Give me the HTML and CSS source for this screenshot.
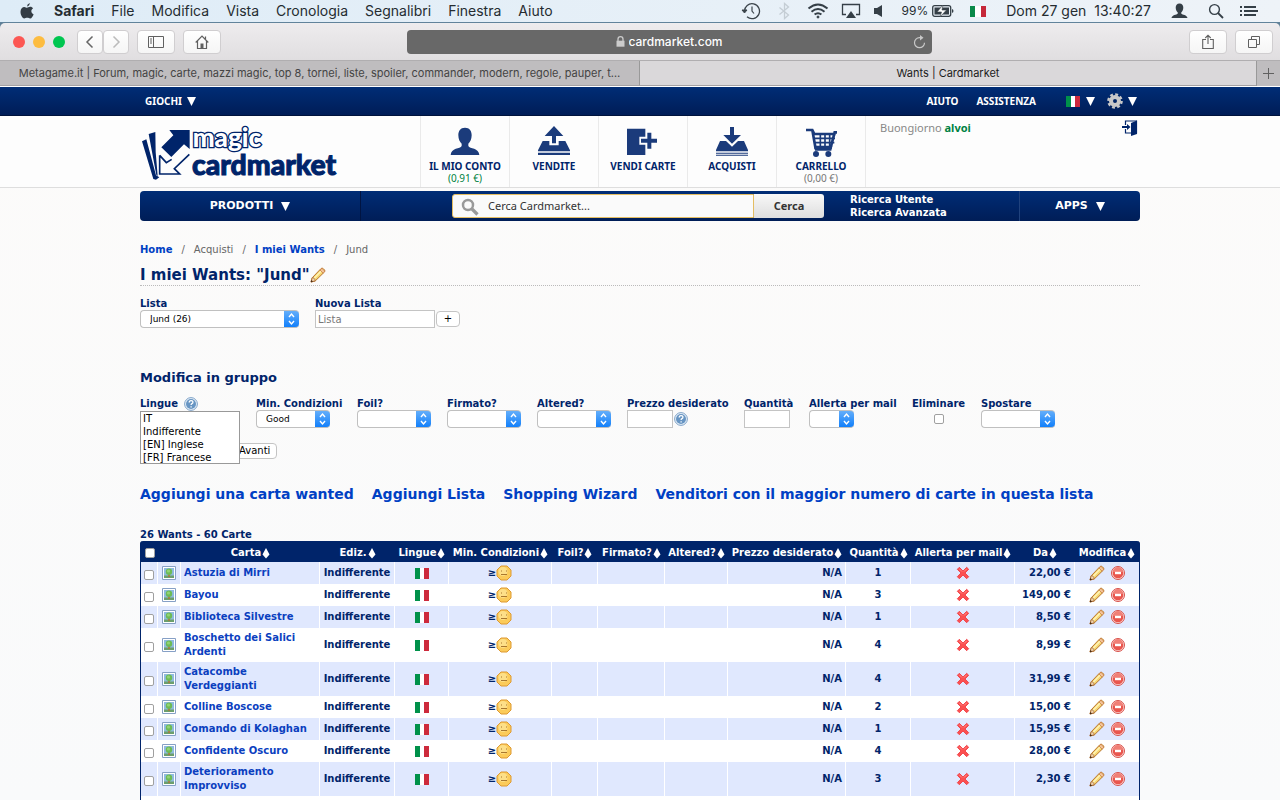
FILE: index.html
```html
<!DOCTYPE html>
<html lang="it">
<head>
<meta charset="utf-8">
<title>Wants | Cardmarket</title>
<link rel="stylesheet" href="styles.css">
</head>
<body>
<svg class="defs" aria-hidden="true">
  <symbol id="flag" viewBox="0 0 14 11"><path fill="#fff" d="M0 0h14v11H0z"/><path fill="#00914a" d="M0 0h5v11H0z"/><path fill="#cd2a3c" d="M9 0h5v11H9z"/></symbol>
  <symbol id="pencil" viewBox="0 0 16 16"><path d="M1 15l1.200-4.200L11 1.600q1-1 2.200 0l1.200 1.200q1 1 0 2.200L5.200 14z" fill="#f6d873" stroke="#b9742c"/><path d="M3.500 12L11.500 3.800" stroke="#fff3b5" stroke-width="1.500"/><path d="M10 3l3.200 3.200 1.600-2L12 1.300z" fill="#f4c59c" stroke="#c98246" stroke-width=".8"/><path d="M1 15l1.200-4.200q.8-.6 1.800.4t1.200 2.600z" fill="#f1d4ae" stroke="#9c5c26" stroke-width=".7"/><path d="M.8 15.300l.6-2.300 1.700 1.500z" fill="#402a18"/></symbol>
  <symbol id="minus" viewBox="0 0 16 16"><circle cx="8" cy="8" r="6.500" fill="#fbd9d5" stroke="#d8504a"/><circle cx="8" cy="8" r="5.300" fill="#e9564e"/><path d="M3 7a5 5 0 0 1 10 0z" fill="#f07f76"/><path d="M5 6.800h6v2.400H5z" fill="#fff"/></symbol>
  <symbol id="cross" viewBox="0 0 16 16"><path d="M3.800 1.500L8 5.700l4.200-4.200 2.300 2.300L10.300 8l4.200 4.200-2.300 2.300L8 10.300l-4.200 4.200-2.300-2.300L5.700 8 1.500 3.800z" fill="#fb5050" stroke="#f03c44"/><path d="M3.700 3.200l3 3M12.300 3.200l-3 3" stroke="#ff9a94"/></symbol>
  <symbol id="face" viewBox="0 0 16 16"><path d="M5 1h6l4 4v6l-4 4H5l-4-4V5z" fill="#fbcb5a" stroke="#dd9933"/><circle cx="7" cy="6.500" r="4.500" fill="#fddf88"/><path d="M5.500 5.500v1M10.500 5.500v1M5 9.500h6" stroke="#a8772e" fill="none"/></symbol>
  <symbol id="photo" viewBox="0 0 14 14"><path d="M.5.500h13v13H.5z" fill="#fff" stroke="#86a0c6"/><path d="M2 2h10v10H2z" fill="#8fbbe0"/><path d="M2 9.500h10V12H2z" fill="#6c9f6c"/><path d="M6.300 8h1.400v3H6.300z" fill="#b5742f"/><circle cx="7" cy="5.800" r="3.200" fill="#6dbb55"/><circle cx="6.500" cy="5" r="1.600" fill="#93d474"/></symbol>
  <symbol id="help" viewBox="0 0 14 14"><circle cx="7" cy="7" r="6.400" fill="#e8f0f8" stroke="#7fa3c8"/><circle cx="7" cy="7" r="5" fill="#6795c3"/><path d="M5.200 5.500q0-1.900 1.900-1.900t1.800 1.600q0 .9-1 1.400-.8.400-.8 1.300M7.100 9.200v1.400" fill="none" stroke="#fff" stroke-width="1.300"/></symbol>
  <symbol id="sort" viewBox="0 0 8 12"><path d="M4 1L7.500 7.500H.5zM.5 7.500h7L4 11.500z" fill="#fff"/></symbol>
  <symbol id="down" viewBox="0 0 9 9"><path d="M0 0h9L4.500 9z" fill="#fff"/></symbol>
</svg>

<div class="menubar">
  <svg class="apple" width="14" height="16" viewBox="0 0 14 16" fill="#333c44"><path d="M9.700 0q.1 2.700-2.700 3.600Q6.900 1 9.700 0zM7 4.700c.8 0 1.600-.9 3.200-.9 1.300 0 2.300.7 2.900 1.500-2.600 1.500-2.200 4.800.5 5.900-.6 1.800-2 4.300-3.400 4.300-1.200 0-1.600-.7-3-.7s-1.900.7-3 .7C2.500 15.500.5 12 .5 8.800S2.500 3.900 4.300 3.900c1.200 0 2 .8 2.700.8z"/></svg>
  <nav class="menus"><b>Safari</b><span>File</span><span>Modifica</span><span>Vista</span><span>Cronologia</span><span>Segnalibri</span><span>Finestra</span><span>Aiuto</span></nav>
  <div class="status">
    <svg width="20" height="18" viewBox="0 0 20 18" fill="none" stroke="#3b444b"><path d="M3.500 9.500a7.500 7.500 0 1 1 2.500 5.300" stroke-width="1.300"/><path d="M1 8h5L3.500 11z" fill="#3b444b"/><path d="M11 4.500V9l2 2.500" stroke-width="1.200"/></svg>
    <svg width="22" height="18" viewBox="4 0 22 18" fill="none" stroke="#c4cdd4" stroke-width="1.300"><path d="M10.500 5.500l9 7.500-4 3.500v-15l4 3.500-9 7.500"/></svg>
    <svg width="22" height="16" viewBox="0 0 22 16" fill="none" stroke="#353f47" stroke-width="2"><path d="M1.500 5.500q9.500-8 19 0M4.500 8.700q6.500-5.400 13 0M7.600 11.600q3.400-2.800 6.800 0"/><circle cx="11" cy="14" r="1" fill="#353f47" stroke-width="1"/></svg>
    <svg width="20" height="16" viewBox="0 0 20 16"><path d="M5 11.500H1.500v-10h17v10H15" fill="none" stroke="#353f47" stroke-width="1.300"/><path d="M10 8l5 7H5z" fill="#353f47"/></svg>
    <svg width="12" height="14" viewBox="0 0 12 14" fill="#353f47"><path d="M1 4h3l5-3v12l-5-3H1z"/></svg>
    <span class="battery">99%<svg width="22" height="14" viewBox="0 0 22 14"><rect x=".7" y="1.700" width="18" height="10.600" rx="2" fill="none" stroke="#353f47" stroke-width="1.300"/><path d="M2.500 3.500h14.500v7H2.500z" fill="#353f47"/><path d="M20 5v4q1.500-.5 1.500-2T20 5z" fill="#353f47"/><path d="M11 1L5 8h4.500L8 13l6.500-7H10z" fill="#fff" stroke="#353f47" stroke-width=".6"/></svg></span>
    <svg class="mac-flag" width="16" height="11" viewBox="0 0 16 11"><path fill="#fff" d="M0 0h16v11H0z"/><path fill="#0b8a4a" d="M0 0h5v11H0z"/><path fill="#c5283a" d="M11 0h5v11h-5z"/></svg>
    <span class="clock">Dom 27 gen&nbsp; 13:40:27</span>
    <svg width="17" height="16" viewBox="0 0 17 16" fill="#353f47"><path d="M8.500.5c2.600 0 3.800 1.800 3.800 4.200S11 8.500 10.300 9.300v1.400c1 1 5.700 1 6.200 4.300H.5c.5-3.300 5.200-3.300 6.200-4.300V9.300C6 8.500 4.700 7.100 4.700 4.700S5.900.5 8.500.5z"/></svg>
    <svg width="16" height="16" viewBox="0 0 16 16" fill="none" stroke="#353f47"><circle cx="6.500" cy="6.500" r="4.900" stroke-width="1.400"/><path d="M10 10l5 5" stroke-width="1.800"/></svg>
    <svg width="18" height="12" viewBox="0 0 18 12" stroke="#353f47" stroke-width="2"><path d="M0 2h2M4 2h12M0 6h2M4 6h14M0 10h2M4 10h12"/></svg>
  </div>
</div>

<div class="browser">
  <div class="toolbar">
    <div class="tool-left">
      <span class="lights"><i class="red"></i><i class="amber"></i><i class="green"></i></span>
      <span class="pair"><button aria-label="Indietro"><svg width="10" height="14" viewBox="0 0 10 14"><path d="M7.500 1.500L2 7l5.500 5.500" fill="none" stroke="#666" stroke-width="1.500"/></svg></button><button aria-label="Avanti"><svg width="10" height="14" viewBox="0 0 10 14"><path d="M2.500 1.500L8 7l-5.500 5.500" fill="none" stroke="#bbb" stroke-width="1.500"/></svg></button></span>
      <button class="tool" aria-label="Barra laterale"><svg width="16" height="12" viewBox="0 0 16 12"><path d="M.5.500h15v11H.5zM5.500.500v11M2 3h2M2 5h2M2 7h2" fill="none" stroke="#606060"/></svg></button>
      <button class="tool" aria-label="Pagina iniziale"><svg width="14" height="14" viewBox="0 0 14 14"><path d="M.7 7.500L7 1.200l6.300 6.300M2.500 6v7.500h9V6M10.500 4V1.500" fill="none" stroke="#606060" stroke-width="1.200"/><path d="M5.500 8.500h3v5h-3z" fill="#606060"/></svg></button>
    </div>
    <div class="address">
      <svg width="9" height="11" viewBox="0 0 9 11"><path d="M2 5V3q0-2.300 2.500-2.300T7 3v2" fill="none" stroke="#ccc" stroke-width="1.300"/><path d="M.5 4.700h8v6h-8z" fill="#ccc"/></svg>
      <input aria-label="Indirizzo" value="cardmarket.com">
      <svg class="reload" width="13" height="14" viewBox="0 0 13 14"><path d="M8 2.700H6.500a5 5 0 1 0 5 5" fill="none" stroke="#c8c8c8" stroke-width="1.200"/><path d="M7 0l3.500 2.700L7 5.400z" fill="#c8c8c8"/></svg>
    </div>
    <div class="tool-right">
      <button class="tool" aria-label="Condividi"><svg width="12" height="16" viewBox="0 0 12 16"><path d="M4 5.500H.7v9h10.600v-9H8M6 10V1.500M3.300 4L6 1.200 8.700 4" fill="none" stroke="#606060" stroke-width="1.100"/></svg></button>
      <button class="tool" aria-label="Pannelli"><svg width="12" height="12" viewBox="0 0 12 12"><path d="M.5 3.500h8v8h-8zM3.500 3.500v-3h8v8h-3" fill="none" stroke="#606060"/></svg></button>
    </div>
  </div>
  <div class="tabs">
    <div class="tab back">Metagame.it | Forum, magic, carte, mazzi magic, top 8, tornei, liste, spoiler, commander, modern, regole, pauper, t…</div>
    <div class="tab">Wants | Cardmarket</div>
    <button class="plus" aria-label="Nuovo pannello"><svg width="11" height="11" viewBox="0 0 11 11"><path d="M5.500 0v11M0 5.500h11" stroke="#606060"/></svg></button>
  </div>
</div>

<div class="page">
  <div class="topbar"><div class="wrap">
    <a href="#">GIOCHI <svg width="9" height="9"><use href="#down"/></svg></a>
    <div class="top-right">
      <a href="#">AIUTO</a><a href="#">ASSISTENZA</a>
      <a class="lang" href="#" aria-label="Lingua"><svg width="14" height="11"><use href="#flag"/></svg><svg width="9" height="9"><use href="#down"/></svg></a>
      <a class="gear" href="#" aria-label="Impostazioni"><svg width="16" height="16" viewBox="0 0 16 16"><circle cx="8" cy="8" r="4" fill="none" stroke="#c9c9c9" stroke-width="4"/><circle cx="8" cy="8" r="6.600" fill="none" stroke="#c9c9c9" stroke-width="2.400" stroke-dasharray="2.900 2.280"/></svg><svg width="9" height="9"><use href="#down"/></svg></a>
    </div>
  </div></div>

  <header class="header"><div class="wrap">
    <a class="logo" href="#" aria-label="magic cardmarket">
      <svg width="200" height="58" viewBox="30 114 600 174" fill="#00246a">
        <path d="M36 166l13-6 29 108 10 6-10 7-8-2z"/>
        <path d="M56 144l20-6 1 60 6 72-4-3z"/>
        <path d="M118 132h61v57l-17-14-38 38-30-29 36-36z"/>
        <path d="M89 208v56h60l-16-16 45-43M89 208l20 22 16-10" fill="none" stroke="#00246a" stroke-width="5"/>
        <text class="logo-a" x="188" y="184">magic</text>
        <text class="logo-b" x="186" y="266">cardmarket</text>
      </svg>
    </a>
    <nav class="icons">
      <a href="#"><svg width="36" height="32" viewBox="0 0 108 96"><path d="M54 8c14 0 20 10 20 23 0 12-5 21-10 25v7c4 9 32 5 33 27H11c1-22 29-18 33-27v-7c-5-4-10-13-10-25C34 18 40 8 54 8z"/></svg><b>IL MIO CONTO</b><span class="money">(0,91 €)</span></a>
      <a href="#"><svg width="36" height="32" viewBox="0 0 108 96"><path d="M54 3l28 30H60v22H48V33H26zM20 48h20v13h28V48h20l14 28v3H6v-3zM6 83h96v7H6z"/></svg><b>VENDITE</b></a>
      <a href="#"><svg width="36" height="32" viewBox="0 0 108 96"><path d="M6 11h55v24H43v24h18v31H6zM67 23h12v18h17v12H79v18H67V53H48V41h19z"/></svg><b>VENDI CARTE</b></a>
      <a href="#"><svg width="36" height="32" viewBox="0 0 108 96"><path d="M48 6h12v24h21L54 56 28 30h20zM18 48h18l18 17 18-17h18l12 27v4H6v-4zM6 83h96v3H6zM6 89h96v3H6z"/></svg><b>ACQUISTI</b></a>
      <a href="#"><svg width="36" height="32" viewBox="0 0 108 96"><path d="M9 15h19l6 12h64M28 15l10 57M102 22h-7l-12 46H38" fill="none" stroke="#1b3b7b" stroke-width="8"/><path d="M34 40h62M36 53h58M52 26v43M66 26v43M80 26v43" fill="none" stroke="#1b3b7b" stroke-width="5"/><path d="M34 62h54l-3 15H36z"/><circle cx="39" cy="87" r="9"/><circle cx="76" cy="87" r="9"/></svg><b>CARRELLO</b><span>(0,00 €)</span></a>
    </nav>
    <div class="hello"><span>Buongiorno <a href="#">alvoi</a></span>
      <a href="#" aria-label="Esci"><svg width="16" height="16" viewBox="0 0 16 16" fill="#00246a"><path d="M3.500 5V1h11v12H10M3.500 9v4H9" fill="none" stroke="#00246a" stroke-width="1.200"/><path d="M9 3l6-2.500V14L9 16zM0 6h5V4l3.500 3L5 10V8H0z"/></svg></a>
    </div>
  </div></header>

  <div class="wrap">
    <nav class="mainnav">
      <a class="section" href="#">PRODOTTI <svg width="9" height="9"><use href="#down"/></svg></a>
      <div class="middle">
        <form class="search">
          <svg width="18" height="18" viewBox="0 0 18 18" fill="none" stroke="#999"><circle cx="7" cy="7" r="5" stroke-width="2.500"/><path d="M11 11l5.500 5.500" stroke-width="3.200"/></svg>
          <input aria-label="Cerca Cardmarket" placeholder="Cerca Cardmarket...">
          <button type="button">Cerca</button>
        </form>
        <div class="adv"><a href="#">Ricerca Utente</a><a href="#">Ricerca Avanzata</a></div>
      </div>
      <a class="section apps" href="#">APPS <svg width="9" height="9"><use href="#down"/></svg></a>
    </nav>

    <main>
      <div class="crumbs"><a href="#">Home</a><i>/</i><span>Acquisti</span><i>/</i><a href="#">I miei Wants</a><i>/</i><span>Jund</span></div>
      <h1>I miei Wants: "Jund"<svg width="16" height="16"><use href="#pencil"/></svg></h1>

      <form class="fields">
        <div class="field w-list"><label for="list">Lista</label><select id="list"><option>Jund (26)</option></select></div>
        <div class="field"><label for="new">Nuova Lista</label><div class="line"><input class="w-new" id="new" placeholder="Lista"><button class="pill add" type="button">+</button></div></div>
      </form>

      <h2>Modifica in gruppo</h2>
      <form class="bulk">
        <div class="fields">
          <div class="field w-lang"><label for="langs">Lingue <svg width="14" height="14"><use href="#help"/></svg></label>
            <select id="langs" class="listbox" multiple size="4"><option>IT</option><option>Indifferente</option><option>[EN] Inglese</option><option>[FR] Francese</option></select></div>
          <div class="field w-cond"><label for="cond">Min. Condizioni</label><select id="cond"><option>Good</option></select></div>
          <div class="field w-sel"><label for="foil">Foil?</label><select id="foil"><option></option></select></div>
          <div class="field w-sel"><label for="signed">Firmato?</label><select id="signed"><option></option></select></div>
          <div class="field w-sel"><label for="alt">Altered?</label><select id="alt"><option></option></select></div>
          <div class="field w-price"><label for="price">Prezzo desiderato</label><div class="line"><input class="w-num" id="price"><svg width="14" height="14"><use href="#help"/></svg></div></div>
          <div class="field w-qty"><label for="qty">Quantità</label><input class="w-num" id="qty"></div>
          <div class="field w-mail"><label for="mail">Allerta per mail</label><select id="mail"><option></option></select></div>
          <div class="field w-del"><label for="del">Eliminare</label><div class="line center"><input type="checkbox" id="del"></div></div>
          <div class="field w-sel"><label for="move">Spostare</label><select id="move"><option></option></select></div>
        </div>
        <button class="pill go" type="button">Avanti</button>
      </form>

      <nav class="actions"><a href="#">Aggiungi una carta wanted</a><a href="#">Aggiungi Lista</a><a href="#">Shopping Wizard</a><a href="#">Venditori con il maggior numero di carte in questa lista</a></nav>

      <p class="count">26 Wants - 60 Carte</p>
      <table>
        <colgroup><col class="c1"><col class="c2"><col class="c3"><col class="c4"><col class="c5"><col class="c6"><col class="c7"><col class="c8"><col class="c9"><col class="c10"><col class="c11"><col class="c12"><col class="c13"><col class="c14"></colgroup>
        <thead><tr>
          <th><input type="checkbox" aria-label="Seleziona tutto"></th><th></th>
          <th>Carta<svg width="8" height="12"><use href="#sort"/></svg></th><th>Ediz.<svg width="8" height="12"><use href="#sort"/></svg></th><th>Lingue<svg width="8" height="12"><use href="#sort"/></svg></th><th>Min. Condizioni<svg width="8" height="12"><use href="#sort"/></svg></th><th>Foil?<svg width="8" height="12"><use href="#sort"/></svg></th><th>Firmato?<svg width="8" height="12"><use href="#sort"/></svg></th><th>Altered?<svg width="8" height="12"><use href="#sort"/></svg></th><th>Prezzo desiderato<svg width="8" height="12"><use href="#sort"/></svg></th><th>Quantità<svg width="8" height="12"><use href="#sort"/></svg></th><th>Allerta per mail<svg width="8" height="12"><use href="#sort"/></svg></th><th>Da<svg width="8" height="12"><use href="#sort"/></svg></th><th>Modifica<svg width="8" height="12"><use href="#sort"/></svg></th>
        </tr></thead>
        <tbody>
          <tr><td><input type="checkbox" aria-label="Astuzia di Mirri"></td><td><svg width="14" height="14"><use href="#photo"/></svg></td><td><a href="#">Astuzia di Mirri</a></td><td>Indifferente</td><td><svg width="14" height="11"><use href="#flag"/></svg></td><td>≥<svg width="16" height="16"><use href="#face"/></svg></td><td></td><td></td><td></td><td>N/A</td><td>1</td><td><svg width="14" height="14"><use href="#cross"/></svg></td><td>22,00 €</td><td><svg width="16" height="16"><use href="#pencil"/></svg><svg width="16" height="16"><use href="#minus"/></svg></td></tr>
          <tr><td><input type="checkbox" aria-label="Bayou"></td><td><svg width="14" height="14"><use href="#photo"/></svg></td><td><a href="#">Bayou</a></td><td>Indifferente</td><td><svg width="14" height="11"><use href="#flag"/></svg></td><td>≥<svg width="16" height="16"><use href="#face"/></svg></td><td></td><td></td><td></td><td>N/A</td><td>3</td><td><svg width="14" height="14"><use href="#cross"/></svg></td><td>149,00 €</td><td><svg width="16" height="16"><use href="#pencil"/></svg><svg width="16" height="16"><use href="#minus"/></svg></td></tr>
          <tr><td><input type="checkbox" aria-label="Biblioteca Silvestre"></td><td><svg width="14" height="14"><use href="#photo"/></svg></td><td><a href="#">Biblioteca Silvestre</a></td><td>Indifferente</td><td><svg width="14" height="11"><use href="#flag"/></svg></td><td>≥<svg width="16" height="16"><use href="#face"/></svg></td><td></td><td></td><td></td><td>N/A</td><td>1</td><td><svg width="14" height="14"><use href="#cross"/></svg></td><td>8,50 €</td><td><svg width="16" height="16"><use href="#pencil"/></svg><svg width="16" height="16"><use href="#minus"/></svg></td></tr>
          <tr><td><input type="checkbox" aria-label="Boschetto dei Salici Ardenti"></td><td><svg width="14" height="14"><use href="#photo"/></svg></td><td><a href="#">Boschetto dei Salici Ardenti</a></td><td>Indifferente</td><td><svg width="14" height="11"><use href="#flag"/></svg></td><td>≥<svg width="16" height="16"><use href="#face"/></svg></td><td></td><td></td><td></td><td>N/A</td><td>4</td><td><svg width="14" height="14"><use href="#cross"/></svg></td><td>8,99 €</td><td><svg width="16" height="16"><use href="#pencil"/></svg><svg width="16" height="16"><use href="#minus"/></svg></td></tr>
          <tr><td><input type="checkbox" aria-label="Catacombe Verdeggianti"></td><td><svg width="14" height="14"><use href="#photo"/></svg></td><td><a href="#">Catacombe Verdeggianti</a></td><td>Indifferente</td><td><svg width="14" height="11"><use href="#flag"/></svg></td><td>≥<svg width="16" height="16"><use href="#face"/></svg></td><td></td><td></td><td></td><td>N/A</td><td>4</td><td><svg width="14" height="14"><use href="#cross"/></svg></td><td>31,99 €</td><td><svg width="16" height="16"><use href="#pencil"/></svg><svg width="16" height="16"><use href="#minus"/></svg></td></tr>
          <tr><td><input type="checkbox" aria-label="Colline Boscose"></td><td><svg width="14" height="14"><use href="#photo"/></svg></td><td><a href="#">Colline Boscose</a></td><td>Indifferente</td><td><svg width="14" height="11"><use href="#flag"/></svg></td><td>≥<svg width="16" height="16"><use href="#face"/></svg></td><td></td><td></td><td></td><td>N/A</td><td>2</td><td><svg width="14" height="14"><use href="#cross"/></svg></td><td>15,00 €</td><td><svg width="16" height="16"><use href="#pencil"/></svg><svg width="16" height="16"><use href="#minus"/></svg></td></tr>
          <tr><td><input type="checkbox" aria-label="Comando di Kolaghan"></td><td><svg width="14" height="14"><use href="#photo"/></svg></td><td><a href="#">Comando di Kolaghan</a></td><td>Indifferente</td><td><svg width="14" height="11"><use href="#flag"/></svg></td><td>≥<svg width="16" height="16"><use href="#face"/></svg></td><td></td><td></td><td></td><td>N/A</td><td>1</td><td><svg width="14" height="14"><use href="#cross"/></svg></td><td>15,95 €</td><td><svg width="16" height="16"><use href="#pencil"/></svg><svg width="16" height="16"><use href="#minus"/></svg></td></tr>
          <tr><td><input type="checkbox" aria-label="Confidente Oscuro"></td><td><svg width="14" height="14"><use href="#photo"/></svg></td><td><a href="#">Confidente Oscuro</a></td><td>Indifferente</td><td><svg width="14" height="11"><use href="#flag"/></svg></td><td>≥<svg width="16" height="16"><use href="#face"/></svg></td><td></td><td></td><td></td><td>N/A</td><td>4</td><td><svg width="14" height="14"><use href="#cross"/></svg></td><td>28,00 €</td><td><svg width="16" height="16"><use href="#pencil"/></svg><svg width="16" height="16"><use href="#minus"/></svg></td></tr>
          <tr><td><input type="checkbox" aria-label="Deterioramento Improvviso"></td><td><svg width="14" height="14"><use href="#photo"/></svg></td><td><a href="#">Deterioramento Improvviso</a></td><td>Indifferente</td><td><svg width="14" height="11"><use href="#flag"/></svg></td><td>≥<svg width="16" height="16"><use href="#face"/></svg></td><td></td><td></td><td></td><td>N/A</td><td>3</td><td><svg width="14" height="14"><use href="#cross"/></svg></td><td>2,30 €</td><td><svg width="16" height="16"><use href="#pencil"/></svg><svg width="16" height="16"><use href="#minus"/></svg></td></tr>
          <tr><td></td><td></td><td></td><td></td><td></td><td></td><td></td><td></td><td></td><td></td><td></td><td></td><td></td><td></td></tr>
        </tbody>
      </table>
    </main>
  </div>
</div>
</body>
</html>
```
FILE: styles.css
```css
* { box-sizing: border-box; }
body {
  margin: 0;
  height: 100vh;
  display: flex;
  flex-direction: column;
  overflow: hidden;
  font: 10px/14px "DejaVu Sans", sans-serif;
  color: #00246a;
}
a { color: inherit; text-decoration: none; }
button, input, select { font: inherit; margin: 0; }
svg { flex: none; }
.defs { position: absolute; width: 0; height: 0; }
.wrap { max-width: 1000px; margin: 0 auto; }

/* system menu bar */
.menubar {
  flex: none;
  display: flex;
  align-items: center;
  height: 23px;
  padding: 0 22px 0 20px;
  background: linear-gradient(90deg, #deecf7, #eef3f8);
  border-bottom: 1px solid #61839b;
  font: 14px/22px Inter, sans-serif;
  color: #252c31;
}
.menus { display: flex; gap: 17px; margin-left: 20px; }
.status { display: flex; align-items: center; gap: 12px; margin-left: auto; }
.battery { display: flex; align-items: center; gap: 4px; margin-left: 5px; font-size: 12px; }
.mac-flag { margin: 0 8px 0 4px; }
.clock { margin-right: 8px; white-space: nowrap; }
.status svg:nth-last-child(2) { margin: 0 4px 0 8px; }

/* browser chrome */
.browser { flex: none; background: #5f7f96; font-family: Inter, sans-serif; }
.toolbar {
  display: grid;
  grid-template-columns: 407fr 525fr 348fr;
  align-items: center;
  height: 37px;
  border-radius: 5px 5px 0 0;
  background: linear-gradient(#eeecee, #e0dee0);
}
.tool-left, .tool-right, .lights, .pair { display: flex; }
.tool-left { gap: 8px; padding-left: 13px; align-items: center; }
.tool-right { gap: 8px; padding-right: 7px; justify-content: flex-end; }
.lights { gap: 8px; margin-right: 4px; }
.lights i { width: 12px; height: 12px; border-radius: 50%; }
.red { background: #fc5753; }
.amber { background: #fdbc40; }
.green { background: #00c650; }
.toolbar button {
  display: flex;
  align-items: center;
  justify-content: center;
  width: 38px;
  height: 24px;
  padding: 0;
  border: 1px solid #d0ced0;
  border-radius: 4px;
  background: linear-gradient(#fff, #f5f5f5);
}
.toolbar .pair button { width: 26px; }
.address {
  position: relative;
  display: flex;
  align-items: center;
  justify-content: center;
  gap: 4px;
  height: 24px;
  border-radius: 4px;
  background: #686868;
}
.address input {
  width: 95px;
  padding: 0;
  border: 0;
  background: none;
  color: #fff;
  font: 500 12px/16px Inter, sans-serif;
}
.reload { position: absolute; right: 6px; }
.tabs {
  display: grid;
  grid-template-columns: 640fr 616fr 24px;
  height: 27px;
  border-top: 1px solid #b0aeb0;
  border-bottom: 1px solid #fff;
  background: #dad8da;
  font-size: 11px;
  line-height: 25px;
  color: #1c1c1c;
}
.tab {
  padding: 0 12px;
  border-bottom: 1px solid #a4a2a4;
  text-align: center;
  white-space: nowrap;
  overflow: hidden;
  text-overflow: ellipsis;
}
.back { background: #bfbdbf; border-right: 1px solid #999; color: #444; }
.plus {
  display: flex;
  align-items: center;
  justify-content: center;
  padding: 0;
  border: 0;
  border-left: 1px solid #999;
  background: #bfbdbf;
}

/* site header */
.page {
  flex: 1;
  overflow: hidden;
  background: linear-gradient(#fcfbfa, #f9fafb);
}
.topbar {
  height: 29px;
  border-bottom: 1px solid #00133c;
  background: linear-gradient(#002d76, #001d57);
  color: #fff;
  font: bold 10px/28px "Noto Sans", sans-serif;
}
.topbar .wrap { display: flex; justify-content: space-between; padding: 0 3px 0 5px; }
.topbar a { display: flex; align-items: center; gap: 5px; }
.top-right { display: flex; gap: 18px; }
.topbar .lang { margin-left: 12px; gap: 6px; }
.topbar .gear { margin-left: -6px; }
.header {
  border-bottom: 1px solid #dedede;
  background: #fdfdfd;
  font-family: "Noto Sans", sans-serif;
}
.header .wrap { display: flex; min-height: 71px; }
.logo { width: 280px; padding-top: 8px; }
.logo svg { overflow: visible; }
.logo-a {
  font: 900 78px Lato, sans-serif;
  fill: #fff;
  stroke: #00246a;
  stroke-width: 8px;
  paint-order: stroke;
}
.logo-b {
  font: 900 85px Lato, sans-serif;
  stroke: #00246a;
  stroke-width: 3px;
}
.icons { display: flex; border-right: 1px solid #eaeaea; }
.icons a {
  display: flex;
  flex-direction: column;
  align-items: center;
  width: 89px;
  padding-top: 9px;
  border-left: 1px solid #eaeaea;
  font-size: 10px;
  line-height: 12px;
  color: #777;
}
.icons svg { fill: #1b3b7b; }
.icons b { margin-top: 3px; color: #00246a; white-space: nowrap; }
.icons .money { color: #008243; }
.hello {
  flex: 1;
  display: flex;
  justify-content: space-between;
  padding: 4px 2px 0 14px;
  font-size: 11px;
  line-height: 16px;
  color: #888;
}
.hello span a { font-weight: bold; color: #008243; }

.mainnav {
  display: grid;
  grid-template-columns: 221px 1fr 121px;
  height: 30px;
  margin-top: 3px;
  border-radius: 4px;
  background: linear-gradient(#002d76, #001d57);
  color: #fff;
  font: bold 12px/30px "Noto Sans", sans-serif;
}
.section {
  display: flex;
  align-items: center;
  justify-content: center;
  gap: 8px;
  border-right: 1px solid #001442;
  font: bold 11px/30px "DejaVu Sans", sans-serif;
}
.apps { border-right: 0; border-left: 1px solid #20427d; }
.middle { display: flex; align-items: center; padding-left: 91px; gap: 26px; }
.search { position: relative; display: flex; flex: 0 1 372px; height: 24px; }
.search svg { position: absolute; left: 9px; top: 4px; }
.search input {
  flex: 1;
  min-width: 0;
  padding: 0 0 0 35px;
  border: 1px solid #e4bd62;
  border-radius: 3px 0 0 3px;
  background: #fafafa;
  font-weight: normal;
  font-size: 11px;
}
.search input::placeholder { color: #333; }
.search button {
  width: 70px;
  padding: 0;
  border: 0;
  border-radius: 0 3px 3px 0;
  background: linear-gradient(#f8f8f8, #dedede);
  color: #333;
  font-size: 11px;
  line-height: 24px;
}
.adv { display: flex; flex-direction: column; font: bold 10px/13px "DejaVu Sans", sans-serif; white-space: nowrap; }

/* content */
.crumbs { display: flex; margin-top: 21px; line-height: 16px; color: #666; }
.crumbs i { margin: 0 9px; font-style: normal; }
.crumbs a { font-weight: bold; color: #0040c4; }
h1 {
  display: flex;
  align-items: center;
  margin: 7px 0 0;
  border-bottom: 1px dotted #bbb;
  font-size: 15px;
  line-height: 20px;
}
h2 { margin: 42px 0 0; font-size: 13px; line-height: 16px; }
.fields { display: flex; gap: 16px; margin-top: 11px; }
.field { position: relative; display: flex; flex-direction: column; align-items: flex-start; }
.field label { display: flex; gap: 6px; font-weight: bold; line-height: 13px; white-space: nowrap; }
.line { display: flex; align-items: center; gap: 1px; height: 18px; }
.center { align-self: center; }
.w-list { width: 159px; }
.w-list select { width: 100%; }
.w-lang { width: 100px; }
.w-cond { width: 85px; }
.w-sel { width: 74px; }
.w-price { width: 101px; }
.w-qty { width: 49px; }
.w-mail { width: 87px; }
.w-del { width: 53px; }
.w-mail select { width: 45px; }
.line .w-new { width: 120px; }
.w-num { width: 46px; }
select {
  width: 74px;
  height: 18px;
  padding: 0 20px 0 9px;
  appearance: none;
  border: 1px solid #c0c0c0;
  border-right: 0;
  border-radius: 4px;
  color: #000;
  font-size: 9px;
  background:
    url("data:image/svg+xml,%3Csvg xmlns='http://www.w3.org/2000/svg' width='15' height='18'%3E%3Cpath d='M5 7l2.500-3L10 7M5 11l2.500 3 2.500-3' fill='none' stroke='white' stroke-width='1.400'/%3E%3C/svg%3E") right center / 15px 18px no-repeat border-box,
    linear-gradient(#69b1fa, #0d7dfb) right center / 15px 18px no-repeat border-box,
    #fff;
}
.listbox {
  position: absolute;
  left: 0;
  top: 14px;
  z-index: 1;
  width: 100px;
  height: 53px;
  padding: 1px 0 0;
  overflow: hidden;
  border: 1px solid #999;
  border-radius: 0;
  background: #fff;
  font-size: 10px;
}
.listbox option { min-height: 13px; padding: 0 2px; line-height: 13px; }
.field input:not([type="checkbox"]) {
  height: 18px;
  padding: 0 2px;
  border: 1px solid #c4c4c4;
  background: #fff;
}
.field input::placeholder { color: #777; }
.pill {
  height: 16px;
  padding: 0 6px;
  border: 1px solid #c4c4c4;
  border-radius: 4px;
  background: #fff;
  color: #000;
  line-height: 14px;
}
.add { width: 24px; }
.go { display: block; margin: 15px 0 0 92px; }
input[type="checkbox"] {
  appearance: none;
  display: block;
  width: 10px;
  height: 10px;
  border: 1px solid #a0a0a0;
  border-radius: 2px;
  background: #fff;
}
.actions {
  display: flex;
  gap: 18px;
  margin-top: 25px;
  font-size: 14px;
  font-weight: bold;
  line-height: 20px;
  color: #0040c4;
  white-space: nowrap;
}
.count { margin: 24px 0 0; font-weight: bold; line-height: 13px; }

table {
  width: 100%;
  table-layout: fixed;
  border: 1px solid #00246a;
  border-top: 0;
  border-spacing: 0;
  border-radius: 3px 3px 0 0;
  background: #00246a;
  font-weight: bold;
}
th {
  height: 21px;
  padding: 3px 0 0;
  color: #fff;
  white-space: nowrap;
}
td {
  height: 22px;
  padding: 0 3px;
  border-right: 1px solid #fff;
  background: #fff;
  text-align: center;
  white-space: nowrap;
}
tr:nth-child(odd) td { background: #e0e8fe; }
td:last-child { border-right: 0; }
th svg, td svg { vertical-align: middle; }
th svg { margin-left: 1px; }
th input { margin-left: 4px; }
td:first-child input { margin: 4px 0 0; }
td:nth-child(3) { padding: 3px; text-align: left; color: #0b3fbf; white-space: normal; }
td:nth-child(10), td:nth-child(13) { text-align: right; }
td:nth-child(2) svg { display: block; margin: auto; }
td:last-child svg + svg { margin-left: 5px; }
.c1 { width: 17px; }
.c2 { width: 23px; }
.c3 { width: 139px; }
.c4 { width: 75px; }
.c5 { width: 54px; }
.c6 { width: 103px; }
.c7 { width: 46px; }
.c8 { width: 67px; }
.c9 { width: 63px; }
.c10 { width: 118px; }
.c11 { width: 65px; }
.c12 { width: 104px; }
.c13 { width: 60px; }
.c14 { width: 64px; }
```
